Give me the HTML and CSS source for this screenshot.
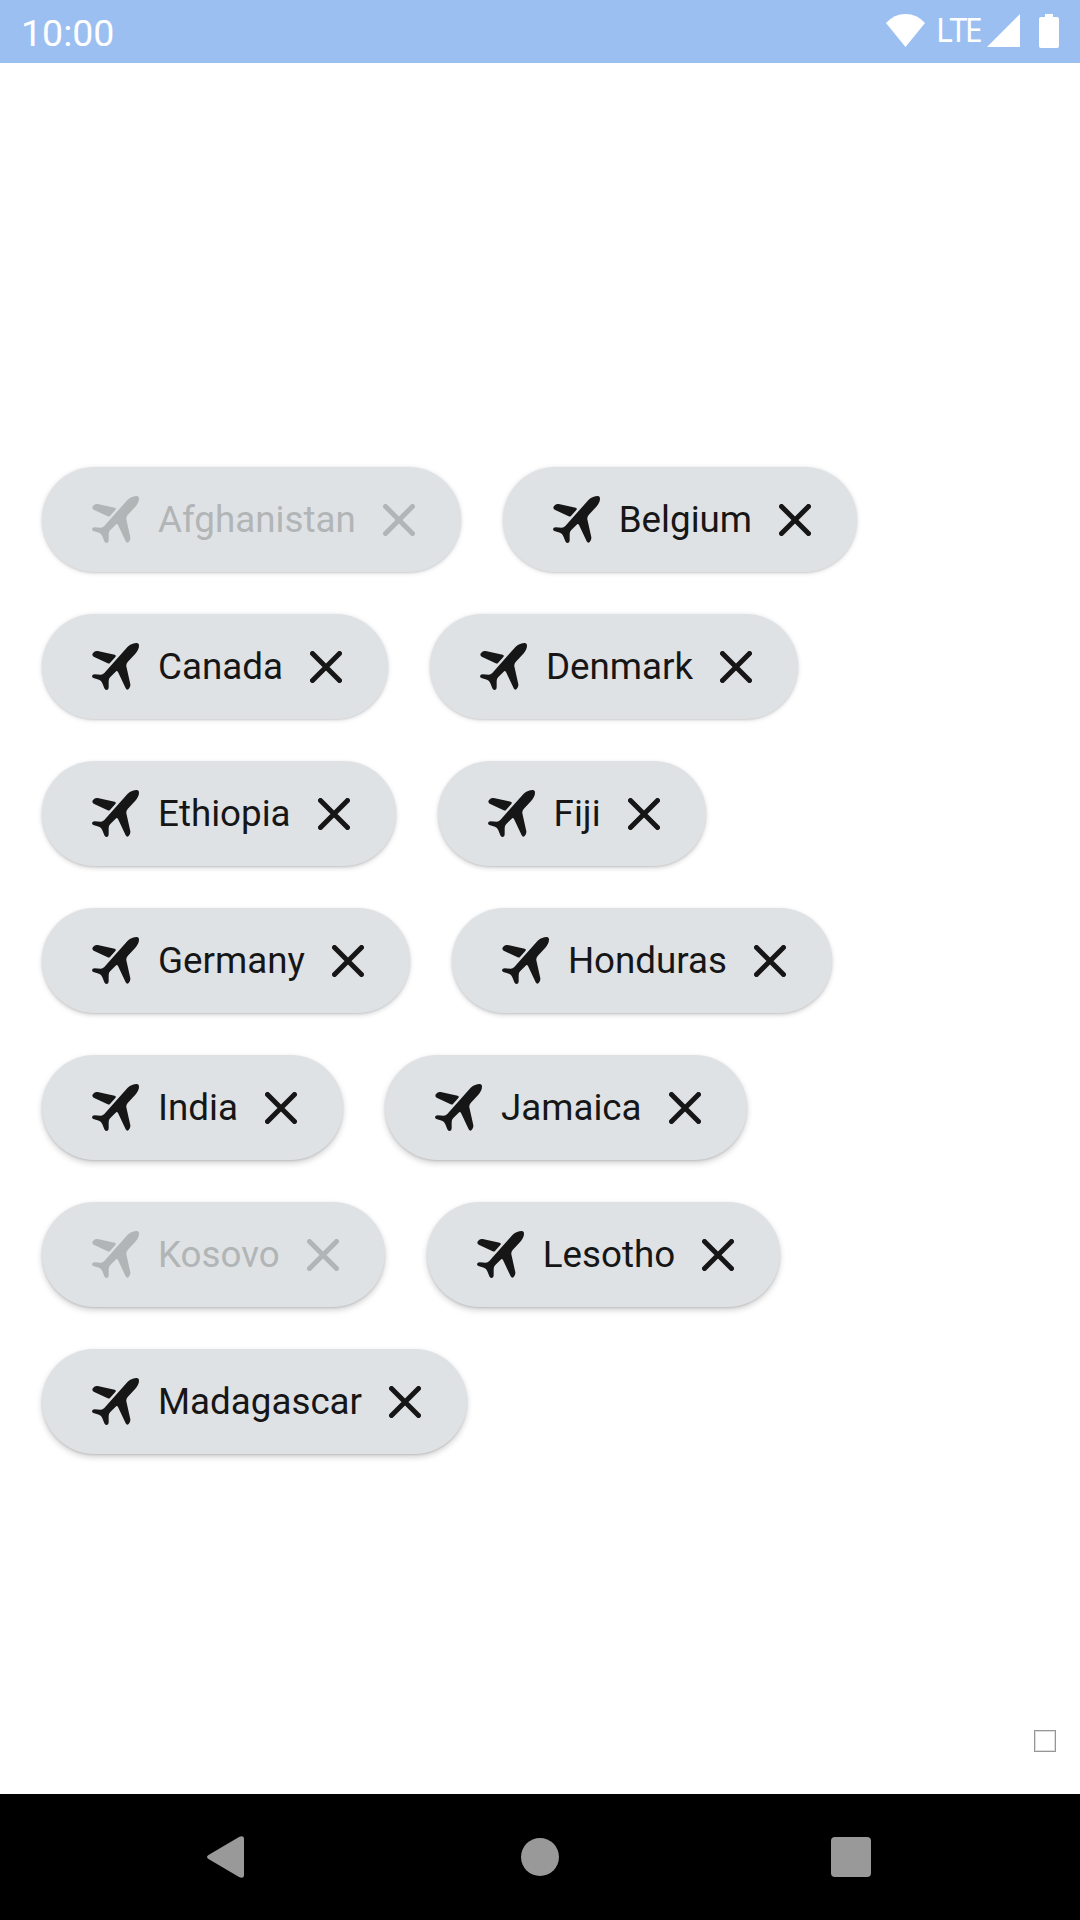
FILE: index.html
```html
<!DOCTYPE html>
<html lang="en">
<head>
<meta charset="utf-8">
<title>Countries</title>
<link rel="stylesheet" href="styles.css">
</head>
<body>
<svg class="defs" width="0" height="0">
  <symbol id="plane" viewBox="0 0 141 141">
    <path d="M1 34Q1 31 7 26Q11 23 17 24L68 35Q74 37 70 42L54 60Q51 63 47 61L5 41Q1 39 1 34Z"/>
    <path d="M107 11Q120 0 134 0Q141 0 141 8Q141 19 130 32L107 57Q102 63 103 70L115 124Q116 132 110 138Q105 143 101 136L78 87Q75 82 71 86L55 102Q50 107 50 114V132Q50 141 43 141Q39 141 37 136L31 121Q28 112 21 110L4 105Q0 103 0 99Q1 94 8 94L26 95Q32 95 37 90Z"/>
  </symbol>
  <symbol id="close" viewBox="0 0 32 32">
    <path d="M2.500 2.500L29.500 29.500M29.500 2.500L2.500 29.500"/>
  </symbol>
</svg>
<div class="screen">
  <header class="status">
    <span class="clock">10:00</span>
    <svg class="wifi" viewBox="0 0 39 33"><path d="M0 9Q8 0 19.500 0T39 9L19.500 33Z"/></svg>
    <span class="network">LTE</span>
    <svg class="signal" viewBox="0 0 33 33"><path d="M33 0V33H0Z"/></svg>
    <svg class="battery" viewBox="0 0 20 34"><path d="M6 0H14V3H18Q20 3 20 5V32Q20 34 18 34H2Q0 34 0 32V5Q0 3 2 3H6Z"/></svg>
  </header>
  <main class="content">
    <div class="chips">
      <div class="chip disabled"><svg class="plane"><use href="#plane"/></svg><span>Afghanistan</span><svg class="close"><use href="#close"/></svg></div>
      <div class="chip"><svg class="plane"><use href="#plane"/></svg><span>Belgium</span><svg class="close"><use href="#close"/></svg></div>
      <div class="chip"><svg class="plane"><use href="#plane"/></svg><span>Canada</span><svg class="close"><use href="#close"/></svg></div>
      <div class="chip"><svg class="plane"><use href="#plane"/></svg><span>Denmark</span><svg class="close"><use href="#close"/></svg></div>
      <div class="chip"><svg class="plane"><use href="#plane"/></svg><span>Ethiopia</span><svg class="close"><use href="#close"/></svg></div>
      <div class="chip"><svg class="plane"><use href="#plane"/></svg><span>Fiji</span><svg class="close"><use href="#close"/></svg></div>
      <div class="chip"><svg class="plane"><use href="#plane"/></svg><span>Germany</span><svg class="close"><use href="#close"/></svg></div>
      <div class="chip"><svg class="plane"><use href="#plane"/></svg><span>Honduras</span><svg class="close"><use href="#close"/></svg></div>
      <div class="chip"><svg class="plane"><use href="#plane"/></svg><span>India</span><svg class="close"><use href="#close"/></svg></div>
      <div class="chip"><svg class="plane"><use href="#plane"/></svg><span>Jamaica</span><svg class="close"><use href="#close"/></svg></div>
      <div class="chip disabled"><svg class="plane"><use href="#plane"/></svg><span>Kosovo</span><svg class="close"><use href="#close"/></svg></div>
      <div class="chip"><svg class="plane"><use href="#plane"/></svg><span>Lesotho</span><svg class="close"><use href="#close"/></svg></div>
      <div class="chip"><svg class="plane"><use href="#plane"/></svg><span>Madagascar</span><svg class="close"><use href="#close"/></svg></div>
    </div>
    <div class="box"></div>
  </main>
  <nav class="navbar">
    <svg class="back" viewBox="0 0 37 42"><path d="M1.500 19L32 1Q37-1 37 3V39Q37 43 32 41L1.500 23Q-1.500 21 1.500 19Z"/></svg>
    <div class="home"></div>
    <div class="recents"></div>
  </nav>
</div>
</body>
</html>
```

FILE: styles.css
```css
body {
  margin: 0;
  background: #fff;
  font-family: Roboto, sans-serif;
}
.defs { display: block; }
.screen {
  width: 1080px;
  height: 1920px;
  display: flex;
  flex-direction: column;
}
.status {
  height: 63px;
  box-sizing: border-box;
  padding: 0 21px;
  display: flex;
  align-items: flex-start;
  background: #9cbff2;
  color: #fff;
}
.status svg { fill: #fff; margin-top: 14px; }
.clock {
  margin-right: auto;
  font-size: 37.5px;
  line-height: 43px;
  margin-top: 12px;
}
.network {
  font-family: "Noto Sans", sans-serif;
  font-size: 32px;
  line-height: 40px;
  margin: 10px 0 0 11px;
  width: 51px;
  letter-spacing: -2.6px;
}
.wifi { width: 39px; height: 33px; }
.signal { width: 33px; height: 33px; }
.battery { width: 20px; height: 34px; margin-left: 19px; }
.content {
  flex: 1;
  display: flex;
  flex-direction: column;
  padding: 404px 24px 42px 42px;
}
.chips {
  display: flex;
  flex-wrap: wrap;
  gap: 42px;
}
.chip {
  box-sizing: border-box;
  height: 105px;
  display: flex;
  align-items: center;
  padding: 0 46px 0 50px;
  border-radius: 53px;
  background: #dfe2e5;
  color: #161616;
  font-size: 36.75px;
  white-space: nowrap;
  box-shadow: 0 1px 5px rgba(0, 0, 0, 0.15), 0 1px 2px rgba(0, 0, 0, 0.1);
}
.chip:nth-child(n + 5) {
  box-shadow: 0 2px 5px rgba(0, 0, 0, 0.17), 0 1px 2px rgba(0, 0, 0, 0.1);
}
.chip:nth-child(n + 9) {
  box-shadow: 0 3px 6px rgba(0, 0, 0, 0.19), 0 1px 2px rgba(0, 0, 0, 0.12);
}
.disabled { color: #b1b5b6; }
.plane {
  width: 47px;
  height: 47px;
  margin-right: 19px;
  fill: currentColor;
}
.close {
  width: 32px;
  height: 32px;
  margin-left: 27px;
  fill: none;
  stroke: currentColor;
  stroke-width: 5px;
  stroke-linecap: round;
}
.box {
  box-sizing: border-box;
  width: 22px;
  height: 22px;
  border: 1px solid #969696;
  box-shadow: inset 0 0 0 1px #ddd;
  margin: auto 0 0 auto;
}
.navbar {
  height: 126px;
  box-sizing: border-box;
  padding: 0 209px 0 207px;
  display: flex;
  align-items: center;
  background: #000;
}
.back { width: 37px; height: 42px; fill: #999; }
.home {
  width: 38px;
  height: 38px;
  border-radius: 50%;
  background: #999;
  margin-left: 277px;
}
.recents {
  width: 40px;
  height: 40px;
  border-radius: 4px;
  background: #999;
  margin-left: 272px;
}
```
